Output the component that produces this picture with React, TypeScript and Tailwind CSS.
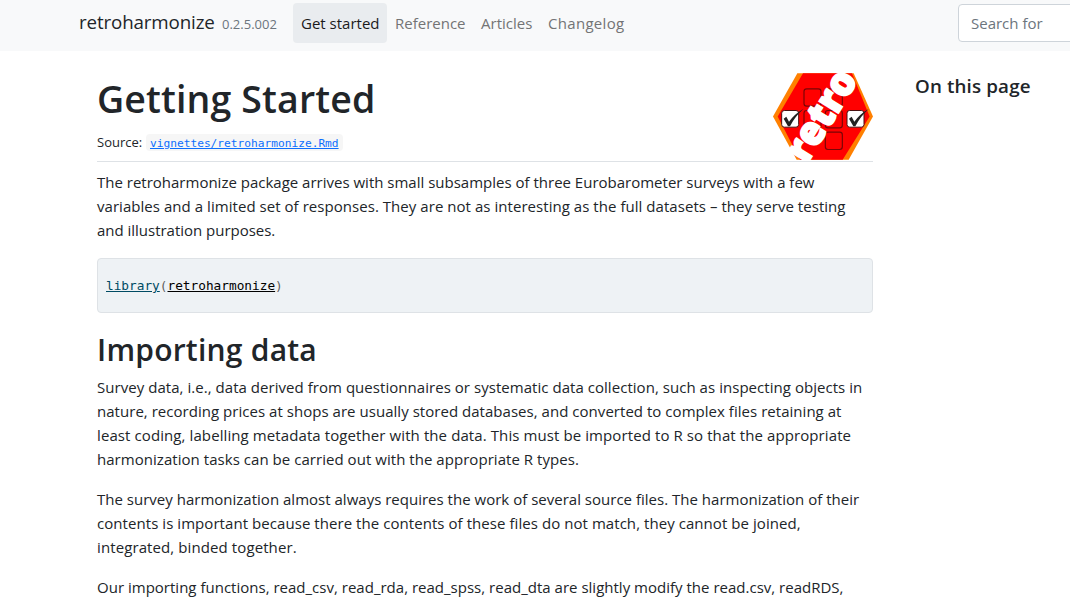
const intro = [
  ['The retroharmonize package arrives with small subsamples of three Eurobarometer surveys with a few', ''],
  ['variables and a limited set of responses. They are not as interesting as the full datasets – they serve testing', 'tracking-[0.046px]'],
  ['and illustration purposes.', 'tracking-[-0.02px]'],
];
const survey = [
  ['Survey data, i.e., data derived from questionnaires or systematic data collection, such as inspecting objects in', 'tracking-[0.043px]'],
  ['nature, recording prices at shops are usually stored databases, and converted to complex files retaining at', 'tracking-[0.034px]'],
  ['least coding, labelling metadata together with the data. This must be imported to R so that the appropriate', 'tracking-[0.095px]'],
  ['harmonization tasks can be carried out with the appropriate R types.', 'tracking-[0.043px]'],
];
const harmonization = [
  ['The survey harmonization almost always requires the work of several source files. The harmonization of their', 'tracking-[0.01px]'],
  ['contents is important because there the contents of these files do not match, they cannot be joined,', 'tracking-[0.06px]'],
  ['integrated, binded together.', 'tracking-[0.1px]'],
];
const functions = [
  ['Our importing functions, read_csv, read_rda, read_spss, read_dta are slightly modify the read.csv, readRDS,', 'tracking-[0.01px]'],
];

function Paragraph({ lines }: { lines: string[][] }) {
  return (
    <p className="mb-4 text-[15px] leading-6">
      {lines.map(([text, tracking]) => (
        <span key={text} className={'block whitespace-nowrap ' + tracking}>{text}</span>
      ))}
    </p>
  );
}

function Logo() {
  return (
    <svg className="h-[87px] w-[100px] shrink-0" viewBox="39 33 300 260">
      <path d="M112 33H281L339 163L266 293H110L39 163Z" fill="#ff8000" />
      <path d="M129 33H276L329 163L248 293H120L53 163Z" fill="#f00" />
      <g fill="none" stroke="#7a0505" strokeWidth="3.5">
        <rect x="132" y="80" width="51" height="52" rx="8" />
        <rect x="196" y="80" width="51" height="52" rx="8" />
        <rect x="132" y="145" width="51" height="52" rx="8" />
        <rect x="196" y="145" width="51" height="52" rx="8" />
        <rect x="196" y="210" width="51" height="52" rx="8" />
      </g>
      {[65, 261].map((x) => (
        <g key={x} transform={`translate(${x} 145)`}>
          <rect width="51" height="50" rx="8" fill="#fff" stroke="#4a1010" strokeWidth="3" />
          <path d="M6 25L14 19L22 34Q38 11 66 -5Q41 17 25 47H19Z" fill="#222" />
        </g>
      ))}
      <text transform="translate(140 307) rotate(-58.5)" textLength="298" lengthAdjust="spacingAndGlyphs" className="font-['Open_Sans',sans-serif] text-[120px] font-extrabold" fill="#fff" stroke="#fff" strokeWidth="6">retro</text>
    </svg>
  );
}

export default function App() {
  return (
    <div className="h-[602px] w-[1070px] overflow-hidden bg-white font-['Open_Sans','Noto_Sans',sans-serif] text-[#212529]">
      <header className="flex h-[51px] items-start bg-[#f8f9fa] pl-[79px] pt-[3px]">
        <span className="mt-[4px] w-[143px] whitespace-nowrap text-[18.75px] leading-[30px] tracking-[-0.13px]">retroharmonize</span>
        <small className="mt-[11px] w-[71px] whitespace-nowrap text-[13px] leading-5 text-[#6c757d]">0.2.5.002</small>
        <nav className="flex whitespace-nowrap text-[15px] leading-6 text-[#737475]">
          <a className="h-10 w-[94px] rounded bg-[#e9ecef] px-2 py-2 text-[#1a1a1b]">Get started</a>
          <a className="w-[86px] px-2 py-2">Reference</a>
          <a className="w-[67px] px-2 py-2 tracking-[0.02px]">Articles</a>
          <a className="px-2 py-2 tracking-[0.3px]">Changelog</a>
        </nav>
        <div className="-mr-4 ml-auto mt-px h-[38px] w-[128px] rounded border border-[#ced4da] bg-white px-3 py-[6px] text-[15px] leading-6 text-[#6c757d]">Search for</div>
      </header>
      <div className="flex pl-[97px]">
        <main className="w-[776px]">
          <div className="flex h-[111px] justify-between border-b border-[#dee2e6] pt-[22px]">
            <div>
              <h1 className="mt-[2px] whitespace-nowrap text-[37.5px] font-semibold leading-[48px] tracking-[0.13px]">Getting Started</h1>
              <div className="mt-[9px] flex items-center whitespace-nowrap text-[13px] leading-[21px]">
                <span className="w-[49px]">Source:</span>
                <code className="h-[17px] rounded bg-[#f6f6f6] px-1 font-['DejaVu_Sans_Mono',monospace] text-[11.2px] leading-[19px] text-[#0d6efd] underline">vignettes/retroharmonize.Rmd</code>
              </div>
            </div>
            <Logo />
          </div>
          <div className="mt-[8px]"><Paragraph lines={intro} /></div>
          <pre className="h-[55px] rounded border border-[#dee2e6] bg-[#eef2f5] px-[8px] py-[17px] font-['DejaVu_Sans_Mono',monospace] text-[12.77px] leading-5 text-[#5e5e5e]"><span className="text-[#004b63] underline">library</span>(<span className="text-black underline">retroharmonize</span>)</pre>
          <h2 className="mb-[6px] mt-[18px] whitespace-nowrap text-[30px] font-semibold leading-[38px] tracking-[0.23px]">Importing data</h2>
          <Paragraph lines={survey} />
          <Paragraph lines={harmonization} />
          <Paragraph lines={functions} />
        </main>
        <aside className="ml-[42px] pt-[23px] text-[18.75px] font-semibold leading-6 tracking-[0.15px]">On this page</aside>
      </div>
    </div>
  );
}
